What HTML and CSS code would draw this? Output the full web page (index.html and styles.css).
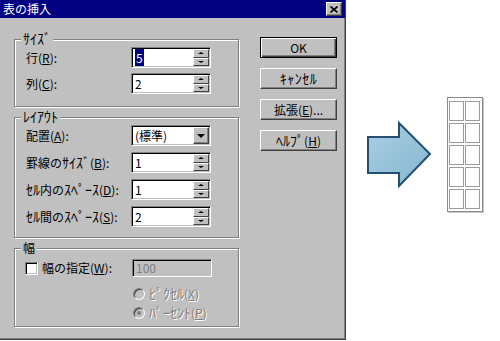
FILE: index.html
```html
<!DOCTYPE html>
<html lang="ja">
<head>
    <meta charset="UTF-8">
    <title>表の挿入</title>
    <link rel="stylesheet" href="styles.css">
</head>
<body>
<div class="scene">
    <div class="dialog">
        <div class="titlebar">
            <span class="title">表の挿入</span>
            <span class="close">
                <svg width="8" height="7" viewBox="0 0 8 7"><path d="M0.5 0.5 L7.5 6.5 M7.5 0.5 L0.5 6.5" stroke="#000" stroke-width="1.6"/></svg>
            </span>
        </div>

        <div class="dialog-body">
            <div class="groups">
                <div class="group group-size">
                    <span class="legend"><span class="hw">ｻｲｽﾞ</span></span>
                    <div class="form-grid tight">
                        <span>行(<u>R</u>):</span>
                        <div class="field"><span class="value"><span class="selected">5</span></span><span class="spin"><span class="spin-btn up"></span><span class="spin-btn down"></span></span></div>
                        <span>列(<u>C</u>):</span>
                        <div class="field"><span class="value">2</span><span class="spin"><span class="spin-btn up"></span><span class="spin-btn down"></span></span></div>
                    </div>
                </div>

                <div class="group group-layout">
                    <span class="legend"><span class="hw">ﾚｲｱｳﾄ</span></span>
                    <div class="form-grid">
                        <span>配置(<u>A</u>):</span>
                        <div class="field"><span class="value">(標準)</span><span class="drop"></span></div>
                        <span>罫線の<span class="hw">ｻｲｽﾞ</span>(<u>B</u>):</span>
                        <div class="field"><span class="value">1</span><span class="spin"><span class="spin-btn up"></span><span class="spin-btn down"></span></span></div>
                        <span><span class="hw">ｾﾙ</span>内の<span class="hw">ｽﾍﾟｰｽ</span>(<u>D</u>):</span>
                        <div class="field"><span class="value">1</span><span class="spin"><span class="spin-btn up"></span><span class="spin-btn down"></span></span></div>
                        <span><span class="hw">ｾﾙ</span>間の<span class="hw">ｽﾍﾟｰｽ</span>(<u>S</u>):</span>
                        <div class="field"><span class="value">2</span><span class="spin"><span class="spin-btn up"></span><span class="spin-btn down"></span></span></div>
                    </div>
                </div>

                <div class="group group-width">
                    <span class="legend">幅</span>
                    <div class="width-grid">
                        <label class="check-label"><span class="checkbox"></span><span>幅の指定(<u>W</u>):</span></label>
                        <div class="field field-disabled"><span class="value">100</span></div>
                        <div class="radios">
                            <div class="radio-row"><span class="radio"></span><span class="disabled"><span class="hw">ﾋﾟｸｾﾙ</span>(<u>X</u>)</span></div>
                            <div class="radio-row"><span class="radio checked"></span><span class="disabled"><span class="hw">ﾊﾟｰｾﾝﾄ</span>(<u>P</u>)</span></div>
                        </div>
                    </div>
                </div>
            </div>

            <div class="buttons">
                <button class="btn btn-default">OK</button>
                <button class="btn"><span class="hw wide">ｷｬﾝｾﾙ</span></button>
                <button class="btn">拡張(<u>E</u>)...</button>
                <button class="btn"><span class="hw">ﾍﾙﾌﾟ</span>(<u>H</u>)</button>
            </div>
        </div>
    </div>

    <svg class="arrow" width="66" height="67" viewBox="0 0 66 67">
        <defs>
            <linearGradient id="arrowFill" x1="0" y1="0" x2="1" y2="1">
                <stop offset="0" stop-color="#a9cfe3"/>
                <stop offset="1" stop-color="#86b6d0"/>
            </linearGradient>
        </defs>
        <path d="M2 16 H33 V2 L64 33 L33 65 V52 H2 Z" fill="url(#arrowFill)" stroke="#23506e" stroke-width="2" stroke-linejoin="miter"/>
    </svg>

    <div class="table-icon">
        <span></span><span></span>
        <span></span><span></span>
        <span></span><span></span>
        <span></span><span></span>
        <span></span><span></span>
    </div>
</div>
</body>
</html>
```

FILE: styles.css
```css
body {
    margin: 0;
    background-color: #fff;
    font-family: "Noto Sans CJK JP", "Noto Sans", sans-serif;
    font-size: 12px;
    color: #000;
}
u {
    text-underline-offset: 1px;
}
/* half-width katakana: Noto draws them small, so bump the size */
.hw {
    font-size: 14px;
    line-height: 12px;
}
.hw.wide {
    letter-spacing: 0.5px;
}
.scene {
    display: flex;
    align-items: flex-start;
}
.dialog {
    flex: none;
    width: 346px;
    height: 340px;
    box-sizing: border-box;
    background-color: #c0c0c0;
    border-right: 1px solid #404040;
    border-bottom: 1px solid #404040;
    box-shadow: inset -1px -1px 0 #808080;
}
.titlebar {
    height: 18px;
    background-color: #000080;
    color: #fff;
    display: flex;
    align-items: center;
    justify-content: space-between;
    padding: 0 3px 0 3px;
}
.title {
    font-size: 12px;
    line-height: 18px;
}
.close {
    width: 16px;
    height: 14px;
    box-sizing: border-box;
    background-color: #c0c0c0;
    border: 1px solid;
    border-color: #fff #404040 #404040 #fff;
    box-shadow: inset -1px -1px 0 #808080;
    display: flex;
    align-items: center;
    justify-content: center;
}
.dialog-body {
    display: flex;
    padding: 21px 0 0 14px;
}
.groups {
    display: flex;
    flex-direction: column;
    gap: 10px;
    width: 225px;
}
.group {
    position: relative;
    box-sizing: border-box;
    border: 1px solid #808080;
    box-shadow: 1px 1px 0 #fff, inset 1px 1px 0 #fff;
}
.group-size {
    height: 68px;
    padding: 7px 0 0 11px;
}
.group-layout {
    height: 121px;
    padding: 7px 0 0 11px;
}
.group-width {
    height: 79px;
    padding: 10px 0 0 10px;
}
.legend {
    position: absolute;
    top: -8px;
    left: 6px;
    padding: 0 2px;
    background-color: #c0c0c0;
    line-height: 14px;
}
.form-grid {
    display: grid;
    grid-template-columns: 105px 80px;
    grid-auto-rows: 21px;
    row-gap: 6px;
    align-items: center;
}
.form-grid.tight {
    row-gap: 5px;
}
.field {
    display: flex;
    height: 21px;
    box-sizing: border-box;
    padding: 1px;
    background-color: #fff;
    border: 1px solid;
    border-color: #808080 #fff #fff #808080;
    box-shadow: inset 1px 1px 0 #000, inset -1px -1px 0 #c0c0c0;
}
.value {
    flex: 1;
    padding-left: 2px;
    line-height: 17px;
    white-space: nowrap;
}
.selected {
    background-color: #000080;
    color: #fff;
    padding: 0 1px;
}
.spin {
    width: 16px;
    display: flex;
    flex-direction: column;
}
.spin-btn {
    flex: 1;
    box-sizing: border-box;
    background-color: #c0c0c0;
    border: 1px solid;
    border-color: #fff #404040 #404040 #fff;
    display: flex;
    align-items: center;
    justify-content: center;
}
.spin-btn::after {
    content: "";
    border-left: 3px solid transparent;
    border-right: 3px solid transparent;
}
.spin-btn.up::after {
    border-bottom: 2px solid #000;
}
.spin-btn.down::after {
    border-top: 2px solid #000;
}
.drop {
    width: 16px;
    box-sizing: border-box;
    background-color: #c0c0c0;
    border: 1px solid;
    border-color: #fff #404040 #404040 #fff;
    box-shadow: inset -1px -1px 0 #808080;
    display: flex;
    align-items: center;
    justify-content: center;
}
.drop::after {
    content: "";
    border-left: 4px solid transparent;
    border-right: 4px solid transparent;
    border-top: 4px solid #000;
}
.width-grid {
    display: grid;
    grid-template-columns: 107px 80px;
    align-items: center;
}
.check-label {
    display: flex;
    align-items: center;
    gap: 4px;
    line-height: 18px;
}
.checkbox {
    width: 13px;
    height: 13px;
    box-sizing: border-box;
    background-color: #fff;
    border: 1px solid;
    border-color: #808080 #fff #fff #808080;
    box-shadow: inset 1px 1px 0 #000, inset -1px -1px 0 #c0c0c0;
}
.field-disabled {
    height: 18px;
    background-color: #c0c0c0;
}
.field-disabled .value {
    line-height: 14px;
    color: #808080;
}
.radios {
    grid-column: 2;
    margin-top: 7px;
    padding-left: 1px;
}
.radio-row {
    display: flex;
    align-items: center;
    gap: 4px;
    height: 19px;
}
.radio {
    flex: none;
    width: 12px;
    height: 12px;
    box-sizing: border-box;
    border-radius: 50%;
    background-color: #c0c0c0;
    border: 1px solid;
    border-color: #808080 #fff #fff #808080;
    box-shadow: inset 1px 1px 0 #404040;
    display: flex;
    align-items: center;
    justify-content: center;
}
.radio.checked::after {
    content: "";
    width: 4px;
    height: 4px;
    border-radius: 50%;
    background-color: #808080;
}
.disabled {
    color: #808080;
    text-shadow: 1px 1px 0 #fff;
}
.buttons {
    display: flex;
    flex-direction: column;
    gap: 10px;
    margin: -2px 0 0 21px;
}
.btn {
    width: 77px;
    height: 21px;
    box-sizing: border-box;
    padding: 0;
    background-color: #c0c0c0;
    border: 1px solid;
    border-color: #fff #404040 #404040 #fff;
    box-shadow: inset -1px -1px 0 #808080;
    font-family: inherit;
    font-size: 12px;
    line-height: 17px;
    color: #000;
}
.btn-default {
    border-color: #000;
    box-shadow: inset 1px 1px 0 #fff, inset -1px -1px 0 #404040, inset -2px -2px 0 #808080;
}
.arrow {
    flex: none;
    margin: 121px 0 0 20px;
}
.table-icon {
    flex: none;
    margin: 97px 0 0 15px;
    display: grid;
    grid-template-columns: 15px 15px;
    grid-auto-rows: 20px;
    column-gap: 1px;
    row-gap: 2px;
    padding: 3px 2px 2px 1px;
    border: 1px solid #8c8c8c;
    box-shadow: 1px 1px 0 #c8c8c8;
}
.table-icon span {
    border: 1px solid #9a9a9a;
}
```
